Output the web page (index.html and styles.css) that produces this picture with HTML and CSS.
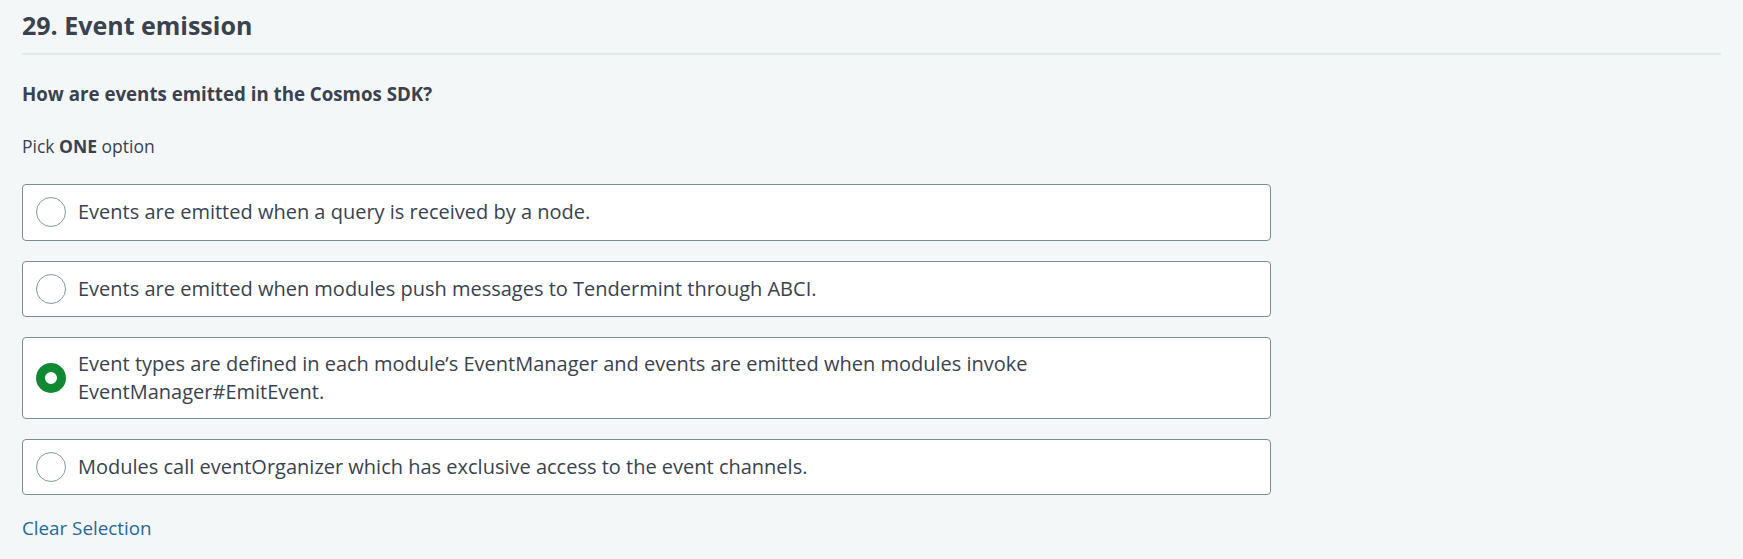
FILE: index.html
```html
<!DOCTYPE html>
<html>
<head>
<meta charset="utf-8">
<link rel="stylesheet" href="styles.css">
</head>
<body>
<div class="page">
  <h1 class="title">29. Event emission</h1>
  <div class="divider"></div>
  <p class="question">How are events emitted in the Cosmos SDK?</p>
  <p class="pick">Pick <strong>ONE</strong> option</p>
  <div class="options">
    <label class="option"><span class="radio"></span><span class="text">Events are emitted when a query is received by a node.</span></label>
    <label class="option"><span class="radio"></span><span class="text">Events are emitted when modules push messages to Tendermint through ABCI.</span></label>
    <label class="option"><span class="radio checked"></span><span class="text">Event types are defined in each module’s EventManager and events are emitted when modules invoke<br>EventManager#EmitEvent.</span></label>
    <label class="option"><span class="radio"></span><span class="text">Modules call eventOrganizer which has exclusive access to the event channels.</span></label>
  </div>
  <a class="clear">Clear Selection</a>
</div>
</body>
</html>
```
FILE: styles.css
```css
html, body {
  margin: 0;
  padding: 0;
  background: #f3f7f7;
}
body {
  font-family: "Open Sans", "Noto Sans", sans-serif;
  color: #39424e;
}
.page {
  padding: 0 22px 0 22px;
}
.title {
  margin: 0;
  padding-top: 5px;
  font-size: 25px;
  line-height: 40px;
  font-weight: 700;
}
.divider {
  height: 2px;
  background: #e1e9e9;
  margin-top: 8px;
}
.question {
  margin: 25px 0 0 0;
  font-size: 18.7px;
  line-height: 28px;
  font-weight: 700;
}
.pick {
  margin: 26px 0 0 0;
  font-size: 17.5px;
  line-height: 24px;
}
.pick strong {
  font-weight: 700;
}
.options {
  width: 1249px;
  margin-top: 26px;
  display: flex;
  flex-direction: column;
  gap: 20px;
}
.option {
  display: flex;
  align-items: center;
  gap: 12px;
  background: #fff;
  border: 1px solid #768f94;
  border-radius: 4px;
  padding: 12px 13px 12.5px 13px;
  font-size: 20px;
  line-height: 27.5px;
}
.radio {
  flex: none;
  width: 30px;
  height: 30px;
  border: 1px solid #7f999d;
  border-radius: 50%;
  box-sizing: border-box;
  background: #fff;
}
.radio.checked {
  border: 9px solid #0f8a33;
}
.clear {
  display: inline-block;
  margin-top: 19px;
  font-size: 18.8px;
  line-height: 28px;
  color: #1f6a98;
}
```
